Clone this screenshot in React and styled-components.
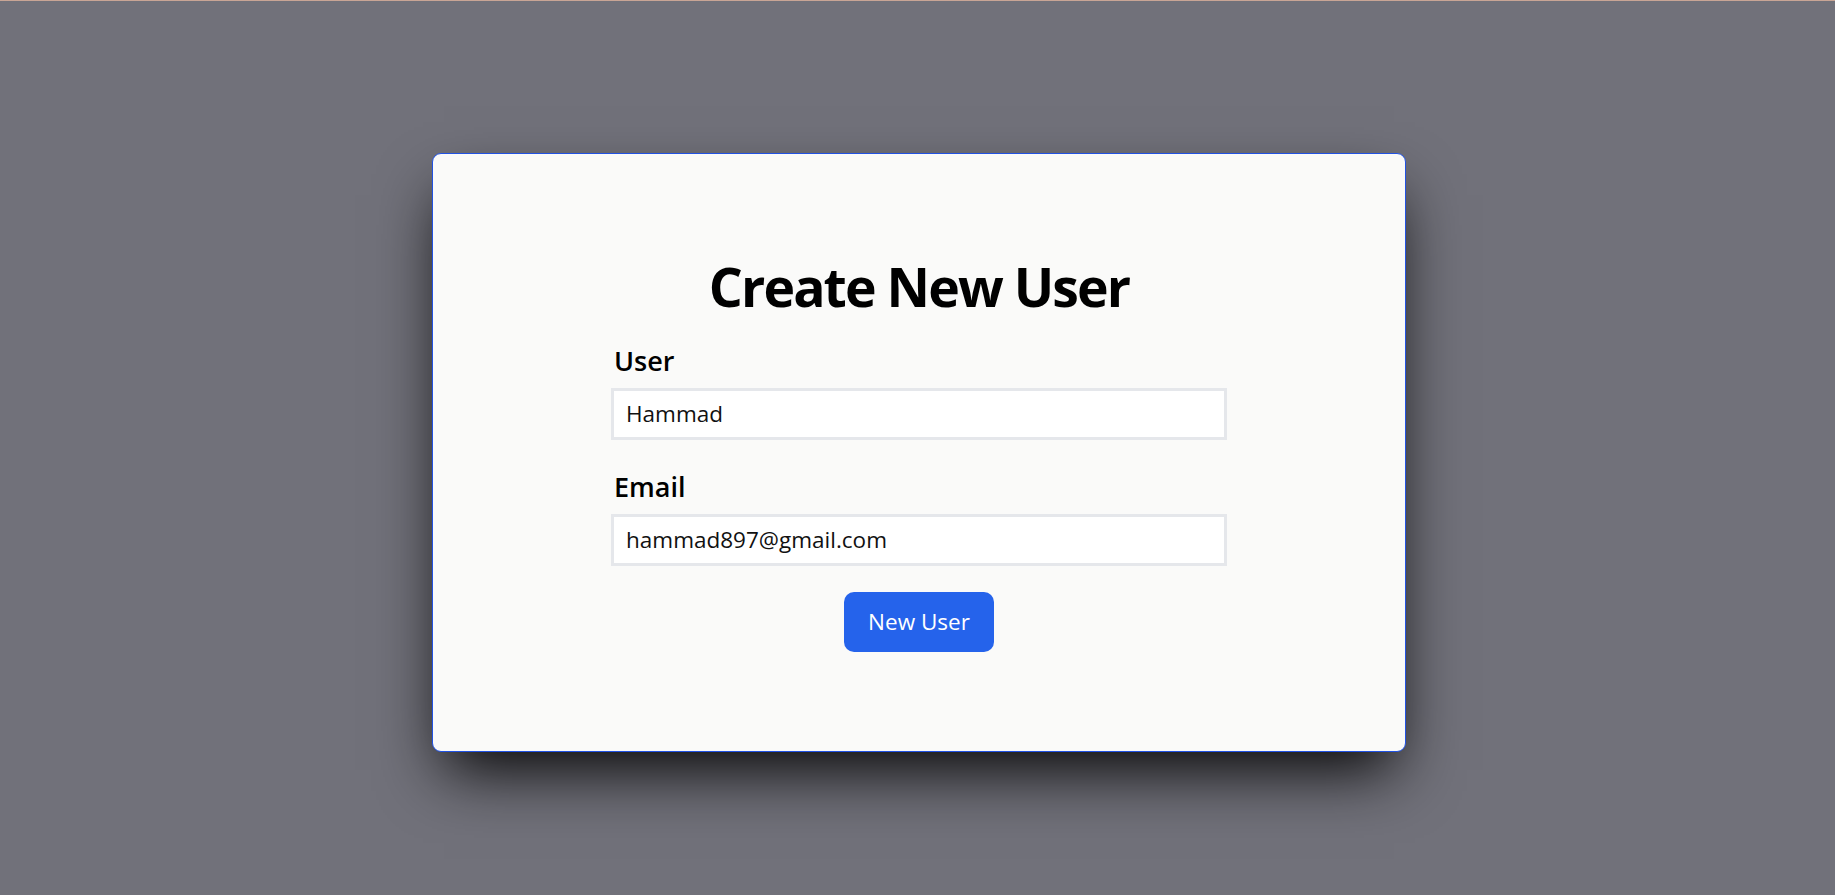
import React, { useEffect, useRef } from 'react'
import styled, { createGlobalStyle } from 'styled-components'

const GlobalStyle = createGlobalStyle`
  * {
    box-sizing: border-box;
  }

  body {
    margin: 0;
    font-family: "Open Sans", "Noto Sans", sans-serif;
    color: #000;
  }
`

const Page = styled.div`
  min-height: 100vh;
  display: flex;
  align-items: center;
  justify-content: center;
  padding: 8px 0 0 3px;
  background: #71717a;
  border-top: 1px solid #c9a595;
`

const Card = styled.div`
  width: 974px;
  height: 599px;
  display: flex;
  flex-direction: column;
  align-items: center;
  padding-top: 106px;
  background: #fafaf9;
  border: 1px solid #2152e3;
  border-radius: 9px;
  box-shadow: 0 30px 60px -12px rgba(0, 0, 0, 0.95);
`

const Title = styled.h1`
  margin: 0;
  font-size: 53.5px;
  line-height: 1;
  font-weight: 700;
  letter-spacing: -1.9px;
`

const Form = styled.form`
  width: 616px;
  display: flex;
  flex-direction: column;
  margin-top: 31px;
`

const Label = styled.label`
  display: block;
  margin: ${(p) => (p.$first ? '0' : '30px')} 0 10px 3px;
  font-size: 27px;
  line-height: 1.25;
  font-weight: 600;
`

const Input = styled.input`
  width: 100%;
  height: 52px;
  padding: 0 12px;
  font-family: inherit;
  font-size: 22.5px;
  color: #111;
  background: #fff;
  border: 3px solid #e5e7eb;
  border-radius: 0;
  outline: none;
  caret-color: #000;
`

const Button = styled.button`
  align-self: center;
  width: 150px;
  height: 60px;
  margin-top: 26px;
  font-family: inherit;
  font-size: 22.5px;
  color: #fff;
  background: #2563eb;
  border: none;
  border-radius: 10px;
  cursor: pointer;
`

const App = () => {
  const emailRef = useRef(null)

  useEffect(() => {
    const el = emailRef.current
    if (el) {
      el.focus()
      el.setSelectionRange(el.value.length, el.value.length)
    }
  }, [])

  return (
    <>
      <GlobalStyle />
      <Page>
        <Card>
          <Title>Create New User</Title>
          <Form onSubmit={(e) => e.preventDefault()}>
            <Label $first htmlFor="user">User</Label>
            <Input id="user" type="text" defaultValue="Hammad" />
            <Label htmlFor="email">Email</Label>
            <Input id="email" type="text" inputMode="email" ref={emailRef} defaultValue="hammad897@gmail.com" />
            <Button type="submit">New User</Button>
          </Form>
        </Card>
      </Page>
    </>
  )
}

export default App
